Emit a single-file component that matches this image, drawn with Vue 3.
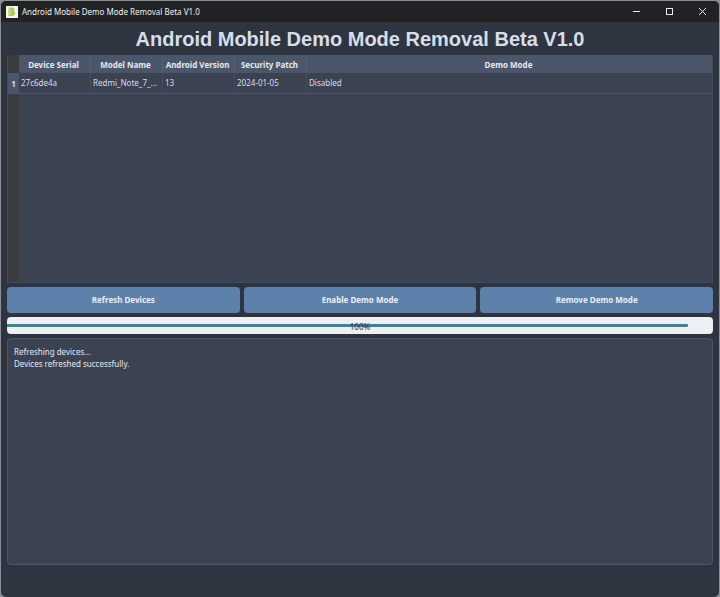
<script setup>
import { ref, computed } from 'vue'

const title = 'Android Mobile Demo Mode Removal Beta V1.0'
const columns = ['Device Serial', 'Model Name', 'Android Version', 'Security Patch', 'Demo Mode']
const devices = ref([['27c6de4a', 'Redmi_Note_7_...', '13', '2024-01-05', 'Disabled']])
const actions = ['Refresh Devices', 'Enable Demo Mode', 'Remove Demo Mode']
const progress = ref(100)
const messages = ref(['Refreshing devices...', 'Devices refreshed successfully.'])
const log = computed(() => messages.value.join('\n'))
</script>

<template>
  <div class="desktop">
    <div class="window">
      <header class="titlebar">
        <svg class="app-icon" viewBox="0 0 12 12" aria-hidden="true">
          <rect width="12" height="12" fill="#f4f7ec" />
          <path d="M3 1.5h3.500q2 .5 2 2.500l-.5 1q1.500 1 1 3-.5 2-2.500 2H2.500V3z" fill="#a9c95c" />
          <path d="M3 2h2v7H3z" fill="#bdd87c" />
        </svg>
        <span class="caption">{{ title }}</span>
        <div class="controls">
          <button type="button" aria-label="Minimize">
            <svg viewBox="0 0 9 9"><path d="M1 4.5h7" /></svg>
          </button>
          <button type="button" aria-label="Maximize">
            <svg viewBox="0 0 9 9"><rect x="1.5" y="1.5" width="6" height="6" /></svg>
          </button>
          <button type="button" aria-label="Close">
            <svg viewBox="0 0 9 9"><path d="M1 1l7 7M8 1l-7 7" /></svg>
          </button>
        </div>
      </header>

      <main class="content">
        <h1>{{ title }}</h1>

        <div class="table-view">
          <table>
            <colgroup>
              <col class="index" />
              <col class="field" />
              <col class="field" />
              <col class="field" />
              <col class="field" />
              <col />
            </colgroup>
            <thead>
              <tr>
                <td class="corner"></td>
                <th v-for="name in columns" :key="name" scope="col">{{ name }}</th>
              </tr>
            </thead>
            <tbody>
              <tr v-for="(device, i) in devices" :key="device[0]">
                <th scope="row">{{ i + 1 }}</th>
                <td v-for="(value, c) in device" :key="c">{{ value }}</td>
              </tr>
            </tbody>
          </table>
        </div>

        <div class="actions">
          <button v-for="label in actions" :key="label" type="button">{{ label }}</button>
        </div>

        <div
          class="progress"
          role="progressbar"
          aria-label="Progress"
          aria-valuemin="0"
          aria-valuemax="100"
          :aria-valuenow="progress"
        >
          <div class="chunk" :style="{ width: progress + '%' }"></div>
          <span class="percent">{{ progress }}%</span>
        </div>

        <textarea class="log" aria-label="Log" readonly :value="log"></textarea>
      </main>
    </div>
  </div>
</template>

<style>
body {
  background: #8b8f94;
}
</style>

<style scoped>
* {
  box-sizing: border-box;
}

.desktop {
  height: 100vh;
  padding: 1px 1px 0;
  font-family: "Noto Sans", "Open Sans", sans-serif;
  font-size: 8px;
  color: #d8dee9;
}

.window {
  display: flex;
  flex-direction: column;
  height: 100%;
  overflow: hidden;
  border-radius: 5px;
  background: #2e3440;
}

.titlebar {
  display: flex;
  align-items: center;
  height: 21px;
  padding-left: 5px;
  background: #202223;
}

.app-icon {
  width: 12px;
  height: 12px;
}

.caption {
  margin-left: 4px;
  color: #f2f2f2;
}

.controls {
  display: flex;
  height: 100%;
  margin-left: auto;
}

.controls button {
  display: flex;
  align-items: center;
  justify-content: center;
  width: 33px;
  padding: 0;
  border: 0;
  background: none;
}

.controls svg {
  width: 9px;
  height: 9px;
  fill: none;
  stroke: #e8e8e8;
  stroke-width: 1;
}

.content {
  display: grid;
  grid-template-rows: auto minmax(0, 1fr) auto auto minmax(0, 1fr);
  grid-template-columns: minmax(0, 1fr);
  flex: 1;
  gap: 4px;
  min-height: 0;
  padding: 0 6px 32px;
}

h1 {
  margin: 0;
  padding-top: 5px;
  font: bold 20px/24px "Liberation Sans", Arial, sans-serif;
  text-align: center;
}

.table-view {
  border: 1px solid #434c5e;
  border-top: 0;
  background: linear-gradient(to right, #3b3c3d 11px, #3b4252 11px);
}

table {
  width: 100%;
  table-layout: fixed;
  border-spacing: 0;
}

col.index {
  width: 11px;
}

col.field {
  width: 72px;
}

th,
td {
  padding: 0;
  line-height: 12px;
  white-space: nowrap;
}

thead th {
  height: 18px;
  padding: 1px 2px 0 0;
  border-right: 1px solid #566075;
  background: #4c566a;
  font-weight: bold;
  color: #e5e9f0;
}

thead th:last-child {
  border-right: 0;
}

tbody th {
  height: 21px;
  background: #4c566a;
  font-weight: bold;
}

tbody td {
  padding: 0 2px;
  border-right: 1px solid #454e60;
  border-bottom: 1px solid #4c566a;
}

tbody td:last-child {
  border-right: 0;
}

.actions {
  display: flex;
  gap: 4px;
}

.actions button {
  flex: 1;
  height: 26px;
  padding: 0;
  border: 0;
  border-radius: 4px;
  background: #5e81ac;
  color: #eceff4;
  font: inherit;
  font-weight: bold;
}

.progress {
  display: flex;
  align-items: center;
  position: relative;
  height: 17px;
  padding-right: 25px;
  border-radius: 4px;
  background: #eceff4;
}

.chunk {
  height: 3px;
  border-radius: 0 1px 1px 0;
  background: #3f8391;
}

.percent {
  position: absolute;
  inset: 0;
  color: #2e3440;
  line-height: 19px;
  text-align: center;
}

.log {
  padding: 7px 6px;
  border: 1px solid #4c566a;
  border-radius: 4px;
  outline: 0;
  background: #3b4252;
  color: #e5e9f0;
  font: inherit;
  line-height: 12px;
  resize: none;
}
</style>
